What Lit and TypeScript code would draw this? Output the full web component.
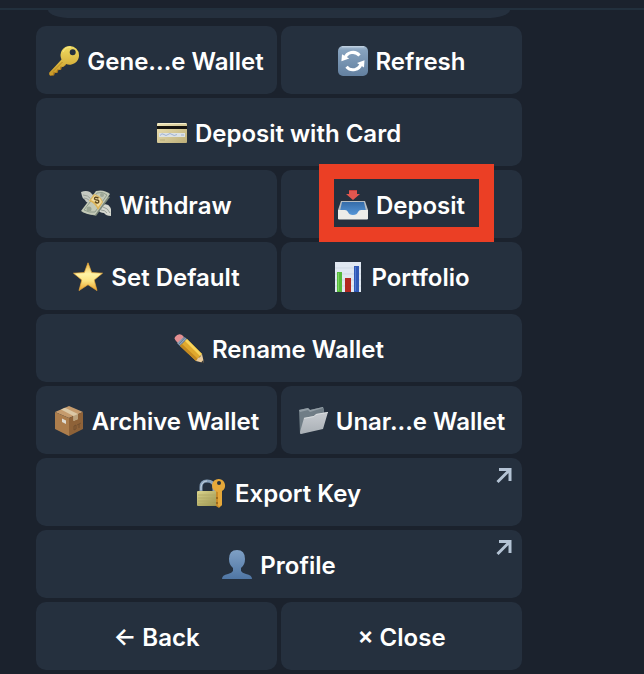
import { LitElement, html, css, svg, nothing } from "lit";
import type { SVGTemplateResult } from "lit";
import { customElement, property } from "lit/decorators.js";

const icons: Record<string, SVGTemplateResult> = {
  key: svg`
    <defs><linearGradient id="g" x1="0" y1="0" x2="0" y2="1"><stop offset="0" stop-color="#f0dc62"/><stop offset="1" stop-color="#c99a28"/></linearGradient></defs>
    <path fill="#a9781f" d="M13 14 L0 27 L1 30 L5 29.6 L6 27 L8.5 27 L9.5 24 L12 24 L13 21 L16 20 L18 17 Z"/>
    <path fill="url(#g)" fill-rule="evenodd" d="M21 0 A9 9 0 0 1 30 9 A9.300 9.300 0 0 1 17 18 L14 21 L11.500 20.500 L11 23.500 L8 23.500 L7.500 26.500 L4.500 26 L4 29 L0.500 29 L0.500 26.500 L12.500 13.500 A9.300 9.300 0 0 1 21 0 Z M23.700 3.300 A3 3 0 1 0 23.700 9.300 A3 3 0 1 0 23.700 3.300 Z"/>
    <path stroke="#b88a24" stroke-width="1" d="M13.500 16 L3 26.500"/>
    <path fill="none" stroke="#fff0a0" stroke-width="1" opacity=".6" d="M14 6 A8 8 0 0 1 22 1.200"/>`,
  refresh: svg`
    <defs><linearGradient id="g" x1="0" y1="0" x2="0" y2="1"><stop offset="0" stop-color="#a9bfd4"/><stop offset=".15" stop-color="#86a2be"/><stop offset="1" stop-color="#6380a0"/></linearGradient></defs>
    <rect width="30" height="30" rx="5" fill="url(#g)"/>
    <path stroke="#c9d8e6" stroke-width="1" d="M4 .8H26"/>
    <g fill="none" stroke="#fff" stroke-width="3"><path d="M6.800 12.500 A8.500 8.500 0 0 1 21.500 9.500"/><path d="M23.200 17.500 A8.500 8.500 0 0 1 8.500 20.800"/></g>
    <path fill="#fff" d="M4 8.200 L3.400 15.300 L11.200 12.600 Z M26.500 14.200 L26 21.600 L19 17 Z"/>`,
  card: svg`
    <defs><linearGradient id="g" x1="0" y1="0" x2="1" y2="1"><stop offset="0" stop-color="#eee3b4"/><stop offset="1" stop-color="#bcae78"/></linearGradient></defs>
    <rect y="5" width="30" height="20" rx="1" fill="url(#g)"/>
    <path fill="#f5efcd" d="M1 5H29V6H1Z"/><path fill="#17150f" d="M0 8H30V11H0Z"/>
    <rect x="2" y="15" width="26" height="4" fill="#dce2e5"/>
    <path fill="none" stroke="#8fa5cd" stroke-width=".8" d="M3 17.500 q2-3 4-1 t4 0 t4 0 t5 0 M24 17h3"/>
    <path stroke="#b3a873" stroke-width=".8" d="M3 22h5"/>`,
  money: svg`
    <path fill="#c5c9c2" d="M0 2 Q5 0 9 2 Q12 4 13 8 L9 13 Q5 13 4 10 Q1 8 1 6 Z"/>
    <path fill="#d6d8cf" d="M21 15 Q27 13 29 17 Q31 20 30 26 Q25 26 23 23 Q19 23 17 20 Z"/>
    <path fill="none" stroke="#8c948d" stroke-width=".8" d="M2 5Q7 5 10 9M3 8Q6 8 9 11M22 17Q27 18 29 23M20 20Q24 20 26 23"/>
    <path fill="#7c8879" d="M1 22 L16 2 L29 7 L15 26 Z"/>
    <path fill="#c3c9b7" d="M0 21 L15 1 Q23 -1 29 4 L14 25 Q6 25 0 21Z"/>
    <path fill="none" stroke="#829080" stroke-width=".8" d="M3 20 L16 3 Q22 1 26 5 L14 22 Q8 23 3 20Z"/>
    <circle cx="21" cy="5" r="2" fill="#9da796"/><circle cx="8" cy="19" r="2.500" fill="#98a391"/>
    <path fill="#deb557" d="M8 11 L13 4 Q20 6 22 12 L17 20 Q14 13 8 11Z"/>
    <path fill="#f0dca0" d="M10 10 L14 5 Q19 7 21 12 L17 17 Q15 12 10 10Z"/>
    <path fill="none" stroke="#5f491f" stroke-width="1.400" d="M17.500 8 Q13.500 6 13.500 9 Q14 10 16 10 Q18.500 10 17.500 12.500 Q16 14 14 11.500"/>`,
  inbox: svg`
    <defs><linearGradient id="g" x1="0" y1="0" x2="0" y2="1"><stop offset="0" stop-color="#356ca9"/><stop offset="1" stop-color="#5b9cde"/></linearGradient></defs>
    <path fill="#b7bdc2" d="M3 11H27L30 20V29H0V20Z"/>
    <path fill="url(#g)" d="M4 12H26L28 21L22 23L18 27H12L8 23L2 21Z"/>
    <path fill="#edece8" d="M0 20H7Q9 20 10 22Q11 25 15 25Q19 25 20 22Q21 20 23 20H30V28.500Q30 29.500 29 29.500H1Q0 29.500 0 28.500Z"/>
    <path fill="#e0564f" d="M11 0H19V4H22L15 10L8 4H11Z"/>
    <path fill="#c63f3c" d="M11 0H19V1H11Z"/>`,
  star: svg`
    <defs><linearGradient id="g" x1="0" y1="0" x2="0" y2="1"><stop offset="0" stop-color="#e9b340"/><stop offset=".4" stop-color="#fff3a6"/><stop offset=".65" stop-color="#fce482"/><stop offset="1" stop-color="#e9a02b"/></linearGradient></defs>
    <path fill="url(#g)" stroke="#eba93a" stroke-width=".7" stroke-linejoin="round" d="M15 .8 L18.700 10.600 L29.500 11.200 L21.200 18 L24 28.600 L15 22.700 L6 28.600 L8.800 18 L.5 11.200 L11.300 10.600Z"/>`,
  chart: svg`
    <path fill="#e0e8f2" d="M2 0H28V30H2Z"/><path stroke="#cfd9e5" d="M2 6H28M2 12H28M2 18H28M2 24H28"/>
    <path fill="#56ba3d" d="M4 10H9V30H4Z"/><path fill="#b32820" d="M12 16H18V30H12Z"/><path fill="#3159b6" d="M21 4H26V30H21Z"/>
    <path fill="#7bd65f" d="M5 11H6V29H5Z"/><path fill="#4f7ad2" d="M22 5H23V29H22Z"/>`,
  pencil: svg`
    <path fill="#e38f92" d="M1 3Q4-1 8 1L10 3L4 9L2 7Q0 5 1 3Z"/>
    <path fill="#91a3b8" d="M10 3L13 5L6 12L3 9Z"/><path stroke="#5f7289" d="M11 3.500L4.500 10.500M12.500 5L6 11.500"/>
    <path fill="#e0a92e" d="M13 5L28 20L22 27L6 12Z"/>
    <path fill="#f8d459" d="M13 5L28 20L26 22L11 7Z"/><path fill="#c58a20" d="M8 10L24 25L22 27L6 12Z"/>
    <path fill="#e8c99b" d="M28 20L30 29L22 27L24 24L26 23Z"/><path fill="#353536" d="M29.400 26L30 29.500L27 28.600Z"/>`,
  box: svg`
    <path fill="#c59b6d" d="M1 6L15 0L29 6L15 12Z"/><path fill="#ac7d4c" d="M1 6L15 12V30L1 23Z"/><path fill="#8e6238" d="M15 12L29 6V23L15 30Z"/>
    <path fill="#dbc8a6" d="M7 3.500L11 1.700L24 8V13L19.500 15V10Z"/><path fill="#bba27d" d="M19.500 10L24 8V13L19.500 15Z"/>
    <path fill="#dedbd2" d="M8 12.500L12 14.500V18L8 16Z"/><path fill="none" stroke="#6d4c2e" stroke-width=".8" d="M20 20v4l2-1v-4zM25 18v4M23 19l4-2"/>`,
  folder: svg`
    <defs><linearGradient id="g" x1="0" y1="0" x2="0" y2="1"><stop offset="0" stop-color="#c8ccd1"/><stop offset="1" stop-color="#a9afb5"/></linearGradient></defs>
    <path fill="#707d86" d="M1 4L10 2L12 4L25 1L26 3V20L2 28Z"/><path fill="#929da5" d="M1 4L10 2L12 4L25 1V2L12 6L10 4L2 6Z"/>
    <path fill="url(#g)" d="M6 12L16 10L18 8L30 6L25 23L3 28Q2 28 2 26Z"/>
    <path fill="none" stroke="#e0e3e5" stroke-width=".8" d="M6 12.300L16 10.500L18 8.500L30 6.400"/>`,
  lock: svg`
    <defs><linearGradient id="g" x1="0" y1="0" x2="1" y2="1"><stop offset="0" stop-color="#dbd58d"/><stop offset="1" stop-color="#98904b"/></linearGradient></defs>
    <path fill="none" stroke="#87a0ba" stroke-width="3" d="M4 14V9Q4 3 10 3Q17 3 17 9V14"/><path fill="none" stroke="#c6d3df" d="M4 12V9Q5 3 10 3"/>
    <rect x="0" y="13" width="22" height="15" rx="1" fill="url(#g)"/><path stroke="#b0a764" stroke-width=".8" d="M1 17H20M1 20H20M1 23H20M1 26H20"/>
    <path fill="#c88b29" d="M19 12H25V27L22 30L19 28Z"/><path fill="#e5a83a" fill-rule="evenodd" d="M22 1A6.500 6.500 0 0 1 25 13V27L22 29L21 27V14A6.500 6.500 0 0 1 22 1ZM22 3A2 2 0 1 0 22 7A2 2 0 1 0 22 3Z"/>
    <path fill="#9a691e" d="M19 19h2v2h-2zM19 24h2v2h-2z"/>`,
  user: svg`
    <defs><linearGradient id="g" x1="0" y1="0" x2="0" y2="1"><stop offset="0" stop-color="#7fa0c5"/><stop offset="1" stop-color="#4f76a4"/></linearGradient></defs>
    <path fill="url(#g)" d="M15 0Q23 0 23 9Q23 15 19 18V21Q20 23 24 24Q30 25 30 29H0Q0 25 6 24Q10 23 11 21V18Q7 15 7 9Q7 0 15 0Z"/>`,
};

@customElement("inline-button")
class InlineButton extends LitElement {
  @property() icon = "";
  @property() label = "";
  @property({ type: Boolean }) external = false;
  @property({ type: Boolean }) highlighted = false;

  static styles = css`
    :host {
      display: block;
      flex: 1 1 0;
      min-width: 0;
      position: relative;
    }
    .button {
      display: flex;
      align-items: center;
      justify-content: center;
      gap: 8px;
      width: 100%;
      height: 68px;
      margin: 0;
      padding: 2px 8px 0;
      border: 0;
      border-radius: 10px;
      background: #25303e;
      color: #fff;
      font: 600 24px/32px Inter, "Liberation Sans", sans-serif;
      white-space: nowrap;
      cursor: pointer;
    }
    .label {
      padding-top: 2px;
    }
    .icon {
      flex: none;
      width: 30px;
      height: 30px;
    }
    .external {
      position: absolute;
      top: 10px;
      right: 10px;
      width: 16px;
      height: 16px;
    }
    .frame {
      position: absolute;
      inset: -6px 28px -4px 38px;
      border: 15px solid #eb3f25;
      pointer-events: none;
    }
  `;

  render() {
    return html`
      <button class="button" type="button">
        ${this.icon
          ? html`<svg class="icon" viewBox="0 0 30 30" aria-hidden="true">${icons[this.icon]}</svg>`
          : nothing}
        <span class="label">${this.label}</span>
      </button>
      ${this.external
        ? html`<svg class="external" viewBox="0 0 16 16" aria-hidden="true">
            <path d="M3 1.500H14V13M14 1.500L1.500 14" fill="none" stroke="#b4c3d4" stroke-width="3" />
          </svg>`
        : nothing}
      ${this.highlighted ? html`<div class="frame"></div>` : nothing}
    `;
  }
}

interface Key {
  label: string;
  icon?: string;
  external?: boolean;
  highlighted?: boolean;
}

const rows: Key[][] = [
  [{ icon: "key", label: "Gene...e Wallet" }, { icon: "refresh", label: "Refresh" }],
  [{ icon: "card", label: "Deposit with Card" }],
  [{ icon: "money", label: "Withdraw" }, { icon: "inbox", label: "Deposit", highlighted: true }],
  [{ icon: "star", label: "Set Default" }, { icon: "chart", label: "Portfolio" }],
  [{ icon: "pencil", label: "Rename Wallet" }],
  [{ icon: "box", label: "Archive Wallet" }, { icon: "folder", label: "Unar...e Wallet" }],
  [{ icon: "lock", label: "Export Key", external: true }],
  [{ icon: "user", label: "Profile", external: true }],
  [{ label: "← Back" }, { label: "× Close" }],
];

@customElement("app-root")
class AppRoot extends LitElement {
  static styles = css`
    :host {
      display: block;
      box-sizing: border-box;
      min-height: 100vh;
      background: #1b222d;
    }
    .header {
      height: 8px;
      border-bottom: 2px solid #22303d;
    }
    .chat {
      max-width: 486px;
      padding: 0 36px 4px;
    }
    .message {
      height: 8px;
      margin: 0 12px 8px;
      border-radius: 0 0 24px 24px / 0 0 8px 8px;
      background: #25303e;
    }
    .keyboard,
    .row {
      display: flex;
      gap: 4px;
    }
    .keyboard {
      flex-direction: column;
    }
  `;

  render() {
    return html`
      <div class="header"></div>
      <main class="chat">
        <div class="message"></div>
        <div class="keyboard">
          ${rows.map(
            (row) => html`<div class="row">
              ${row.map(
                (key) => html`<inline-button
                  .icon=${key.icon ?? ""}
                  .label=${key.label}
                  .external=${key.external ?? false}
                  .highlighted=${key.highlighted ?? false}
                ></inline-button>`
              )}
            </div>`
          )}
        </div>
      </main>
    `;
  }
}
